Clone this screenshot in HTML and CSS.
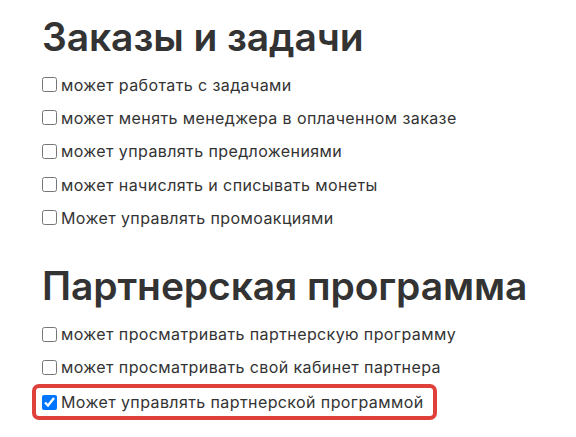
FILE: index.html
```html
<!DOCTYPE html>
<html lang="ru">
<head>
    <meta charset="UTF-8">
    <meta name="viewport" content="width=device-width, initial-scale=1.0">
    <title>Права доступа</title>
    <link rel="stylesheet" href="styles.css">
</head>
<body>
    <div class="rights">
        <h2 class="group-title">Заказы и задачи</h2>
        <label class="right"><input type="checkbox"> может работать с задачами</label>
        <label class="right"><input type="checkbox"> может менять менеджера в оплаченном заказе</label>
        <label class="right"><input type="checkbox"> может управлять предложениями</label>
        <label class="right"><input type="checkbox"> может начислять и списывать монеты</label>
        <label class="right"><input type="checkbox"> Может управлять промоакциями</label>

        <h2 class="group-title second">Партнерская программа</h2>
        <label class="right"><input type="checkbox"> может просматривать партнерскую программу</label>
        <label class="right"><input type="checkbox"> может просматривать свой кабинет партнера</label>
        <label class="right marked"><input type="checkbox" checked> Может управлять партнерской программой</label>
    </div>
</body>
</html>
```

FILE: styles.css
```css
body {
    margin: 0;
    background-color: #fff;
    color: #333;
    font-family: Inter, "Noto Sans", sans-serif;
}
.rights {
    padding: 13px 0 0 42px;
    display: flex;
    flex-direction: column;
    align-items: flex-start;
}
.group-title {
    margin: 0 0 7px 0;
    font-size: 39px;
    font-weight: 600;
    line-height: 48px;
    letter-spacing: -0.1px;
    color: #333;
}
.group-title.second {
    margin-top: 28px;
}
.right {
    display: flex;
    align-items: center;
    height: 33.3px;
    font-size: 16px;
    letter-spacing: 0.4px;
    color: #333;
}
.right input {
    margin: 0 4px 0 0;
    width: 15px;
    height: 15px;
}
/* highlighted permission */
.marked {
    margin-left: -10px;
    padding: 0 9px 0 6px;
    border: 4px solid #e0403a;
    border-radius: 7px;
    height: 28px;
}
```
